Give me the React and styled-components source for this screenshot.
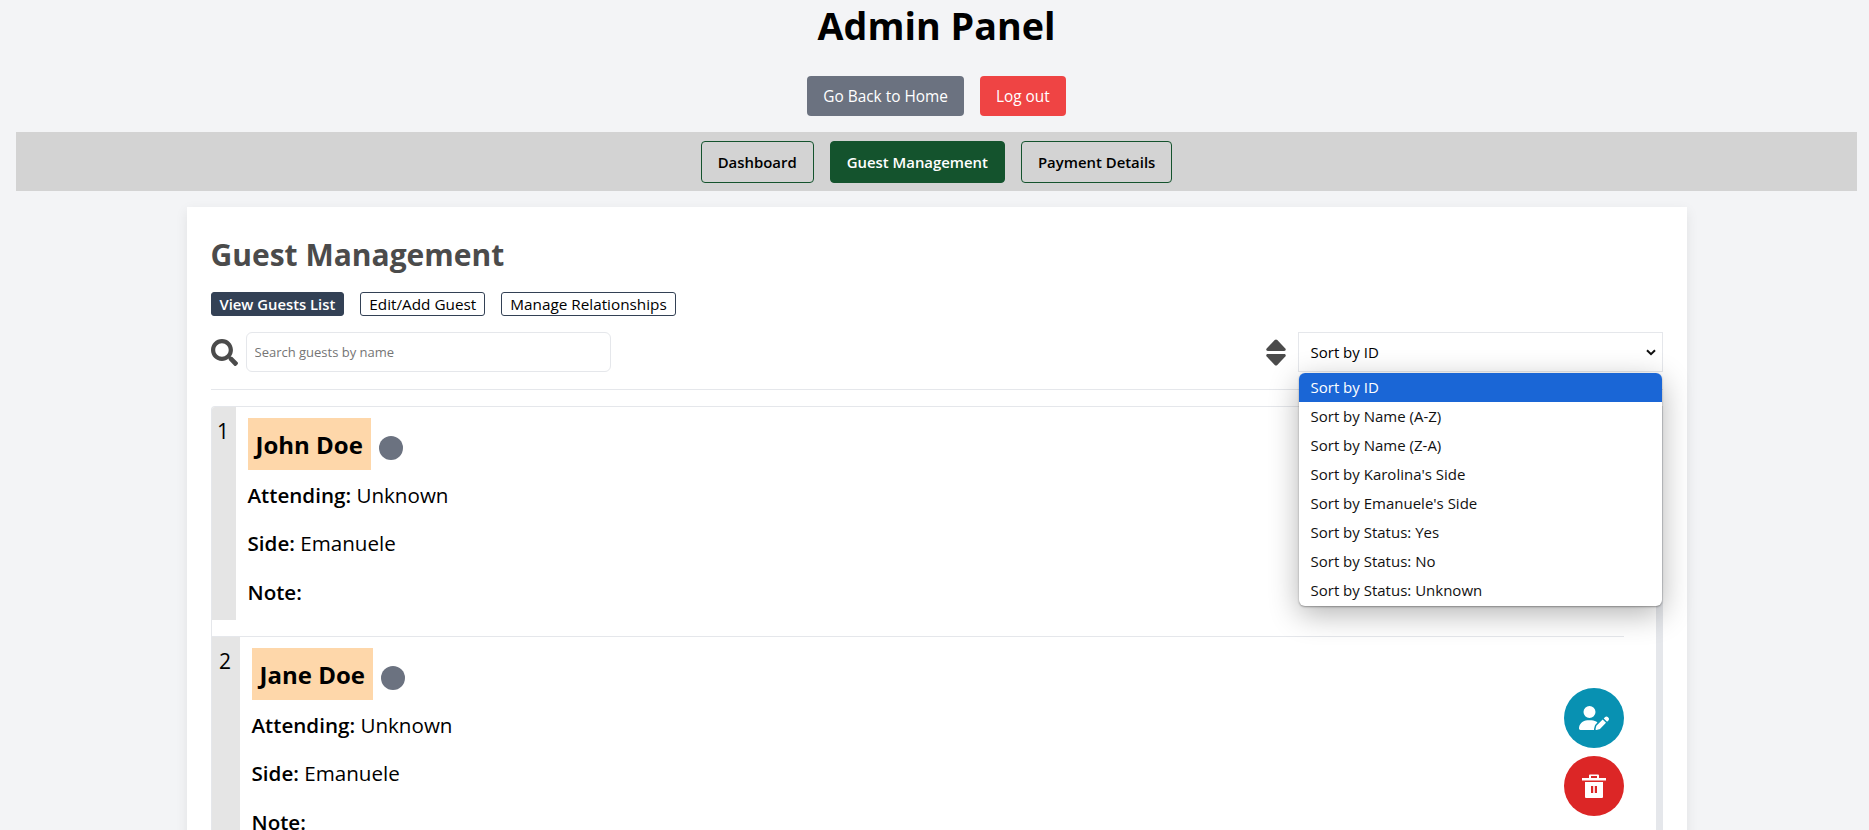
import React from "react";
import styled, { createGlobalStyle } from "styled-components";

const Global = createGlobalStyle`
  html, body { margin: 0; height: 830px; overflow: hidden; background: #f3f4f6; }
  body { font-family: "Open Sans", "Noto Sans", sans-serif; color: #000; }
  * { box-sizing: border-box; }
`;

const Page = styled.div`
  width: 1869px;
  height: 830px;
  padding: 0 12px 0 16px;
  overflow: hidden;
`;

const Title = styled.h1`
  margin: 0;
  height: 52px;
  line-height: 52px;
  text-align: center;
  font-size: 37.7px;
  font-weight: 700;
`;

const TopActions = styled.div`
  display: flex;
  justify-content: center;
  gap: 16px;
  margin-top: 24px;
`;

const TopButton = styled.button`
  height: 40px;
  padding: 0 16px;
  border: 0;
  border-radius: 4px;
  background: ${(p) => p.$bg};
  color: #fff;
  font: 400 15.4px "Open Sans", sans-serif;
`;

const NavBand = styled.nav`
  display: flex;
  justify-content: center;
  align-items: center;
  gap: 16px;
  height: 59px;
  margin-top: 16px;
  background: #d3d3d3;
`;

const NavButton = styled.button`
  height: 42px;
  padding: 0 16px;
  border: 1px solid #14532d;
  border-radius: 4px;
  background: ${(p) => (p.$active ? "#14532d" : "transparent")};
  color: ${(p) => (p.$active ? "#fff" : "#000")};
  font: 600 14.9px "Open Sans", sans-serif;
`;

const Card = styled.main`
  width: 1500px;
  height: 640px;
  margin: 16px auto 0;
  padding: 24px 24px 0;
  background: #fff;
  box-shadow: 0 4px 12px rgba(0, 0, 0, 0.08);
`;

const Heading = styled.h2`
  margin: 0;
  height: 48px;
  line-height: 48px;
  font-size: 30px;
  font-weight: 700;
  color: #4b4b4b;
`;

const SubTabs = styled.div`
  display: flex;
  gap: 16px;
  margin-top: 13px;
`;

const SubTab = styled.button`
  height: 24px;
  padding: 0 8px;
  border: 1px solid #334155;
  border-radius: 3px;
  background: ${(p) => (p.$active ? "#334155" : "#fff")};
  color: ${(p) => (p.$active ? "#fff" : "#000")};
  font: ${(p) => (p.$active ? "600 14.8px" : "500 15.3px")} "Open Sans", sans-serif;
  white-space: nowrap;
`;

const Controls = styled.div`
  display: flex;
  justify-content: space-between;
  align-items: center;
  height: 40px;
  margin-top: 16px;
`;

const SearchGroup = styled.div`
  display: flex;
  align-items: center;
  gap: 8px;
`;

const SearchInput = styled.input`
  width: 365px;
  height: 40px;
  padding: 0 8px;
  border: 1px solid #e5e7eb;
  border-radius: 6px;
  background: #fff;
  font: 400 13px "Open Sans", sans-serif;
  outline: none;
  &::placeholder { color: #757575; opacity: 1; }
`;

const SortGroup = styled.div`
  position: relative;
  display: flex;
  align-items: center;
  gap: 12px;
`;

const SortBox = styled.div`
  position: relative;
  display: flex;
  align-items: center;
  justify-content: space-between;
  width: 365px;
  height: 40px;
  padding: 0 6px 0 12px;
  border: 1px solid #e5e7eb;
  background: #fff;
  font-size: 15px;
`;

const Dropdown = styled.ul`
  position: absolute;
  top: 40px;
  right: 0;
  z-index: 5;
  width: 363px;
  height: 233px;
  margin: 0;
  padding: 0;
  list-style: none;
  overflow: hidden;
  background: #fff;
  border-radius: 6px;
  box-shadow: 0 8px 30px rgba(0, 0, 0, 0.3), 0 1px 2px rgba(0, 0, 0, 0.35);
`;

const Option = styled.li`
  height: 29px;
  line-height: 29px;
  padding-left: 12px;
  font-size: 15px;
  background: ${(p) => (p.$selected ? "#1a66d6" : "transparent")};
  color: ${(p) => (p.$selected ? "#fff" : "#111")};
`;

const Divider = styled.hr`
  height: 1px;
  margin: 17px 0 0;
  border: 0;
  background: #e5e7eb;
`;

const List = styled.div`
  height: 424px;
  margin-top: 16px;
  border-top: 1px solid #e5e7eb;
  border-right: 7px solid #e5e7eb;
  border-left: 1px solid #e5e7eb;
  border-top-left-radius: 4px;
  overflow: hidden;
`;

const GuestRow = styled.article`
  position: relative;
  display: flex;
  align-items: flex-start;
  margin-bottom: ${(p) => p.$gap}px;
`;

const IndexCell = styled.div`
  flex: 0 0 ${(p) => p.$w}px;
  height: ${(p) => p.$h}px;
  margin-left: -1px;
  padding-top: 8px;
  background: #e5e5e5;
  text-align: center;
  font-size: 21px;
  line-height: 32px;
`;

const GuestBody = styled.div`
  flex: 1;
  padding: 11px 0 0 12px;
`;

const NameRow = styled.div`
  display: flex;
  align-items: center;
  gap: 8px;
  height: 52px;
  margin-bottom: 1px;
`;

const NameTag = styled.div`
  display: flex;
  align-items: center;
  height: 52px;
  padding: 0 8px;
  background: #fed7aa;
  font-size: 24px;
  font-weight: 700;
  white-space: nowrap;
`;

const StatusDot = styled.span`
  width: 24px;
  height: 24px;
  margin-top: 8px;
  border-radius: 50%;
  background: #6b7280;
`;

const Field = styled.p`
  margin: 0;
  height: 48.4px;
  line-height: 48px;
  font-size: 20.6px;
  font-weight: 400;
  white-space: nowrap;
  & b { font-weight: 600; }
`;

const RowRule = styled.div`
  width: 1412px;
  height: 1px;
  background: #e5e7eb;
`;

const RowActions = styled.div`
  position: absolute;
  top: 51px;
  right: 32px;
  display: flex;
  flex-direction: column;
  gap: 8px;
`;

const Round = styled.button`
  display: flex;
  align-items: center;
  justify-content: center;
  width: 60px;
  height: 60px;
  padding: 0;
  border: 0;
  border-radius: 50%;
  background: ${(p) => p.$bg};
`;

const SearchIcon = () => (
  <svg width="27" height="27" viewBox="0 0 512 512" fill="#4b4b4b">
    <path d="M505 442.700L405.300 343c-4.500-4.500-10.600-7-17-7H372c27.600-35.300 44-79.700 44-128C416 93.100 322.900 0 208 0S0 93.100 0 208s93.100 208 208 208c48.300 0 92.700-16.400 128-44v16.300c0 6.400 2.500 12.500 7 17l99.700 99.700c9.400 9.400 24.600 9.400 33.900 0l28.300-28.300c9.400-9.400 9.400-24.600.1-34zM208 336c-70.700 0-128-57.200-128-128 0-70.700 57.200-128 128-128 70.700 0 128 57.200 128 128 0 70.700-57.200 128-128 128z" />
  </svg>
);

const SortIcon = () => (
  <svg width="20" height="27" viewBox="0 0 20 27" fill="#4b4b4b">
    <path d="M8.700 1a2 2 0 0 1 2.600 0l8 8.500c1 1.100.3 2.500-1.100 2.500H1.800C.4 12-.3 10.600.7 9.500z" />
    <path d="M8.700 26a2 2 0 0 0 2.600 0l8-8.500c1-1.100.3-2.500-1.100-2.500H1.800C.4 15-.3 16.400.7 17.500z" />
  </svg>
);

const Chevron = () => (
  <svg width="10" height="7" viewBox="0 0 10 7" fill="none" stroke="#111" strokeWidth="2">
    <path d="M1 1.200l4 4 4-4" />
  </svg>
);

const UserEdit = () => (
  <svg width="30" height="24" viewBox="0 0 640 512" fill="#fff">
    <path d="M224 256A128 128 0 1 0 224 0a128 128 0 1 0 0 256zm-45.700 48C79.800 304 0 383.800 0 482.300C0 498.700 13.300 512 29.700 512H322.800c-3.100-8.800-3.700-18.400-1.400-27.800l15-60.100c2.800-11.300 8.600-21.500 16.800-29.700l40.300-40.300c-32.100-31-75.700-50.100-123.900-50.100H178.300zm435.500-68.300c-15.600-15.600-40.900-15.600-56.600 0l-29.400 29.400 71 71 29.400-29.400c15.600-15.600 15.600-40.900 0-56.600l-14.400-14.400zM375.900 417c-4.100 4.100-7 9.200-8.400 14.900l-15 60.100c-1.400 5.500 .2 11.200 4.200 15.200s9.700 5.600 15.200 4.200l60.100-15c5.600-1.400 10.800-4.300 14.900-8.400L576.100 358.700l-71-71L375.900 417z" />
  </svg>
);

const Trash = () => (
  <svg width="26" height="26" viewBox="0 0 26 26" fill="#fff">
    <path d="M9 1.500h8a1 1 0 0 1 1 1V5h7v2.500H1V5h7V2.500a1 1 0 0 1 1-1zM10 3v2h6V3z" />
    <path fillRule="evenodd" d="M4 9h18v15a1 1 0 0 1-1 1H5a1 1 0 0 1-1-1zm6 4v7h2.200v-7zm3.800 0v7H16v-7z" />
  </svg>
);

const sortOptions = [
  "Sort by ID",
  "Sort by Name (A-Z)",
  "Sort by Name (Z-A)",
  "Sort by Karolina's Side",
  "Sort by Emanuele's Side",
  "Sort by Status: Yes",
  "Sort by Status: No",
  "Sort by Status: Unknown",
];

const guests = [
  { id: 1, name: "John Doe", w: 25, h: 213, gap: 16 },
  { id: 2, name: "Jane Doe", w: 29, h: 230, gap: 0 },
];

const Guest = ({ guest }) => (
  <GuestRow $gap={guest.gap}>
    <IndexCell $w={guest.w} $h={guest.h}>{guest.id}</IndexCell>
    <GuestBody>
      <NameRow>
        <NameTag>{guest.name}</NameTag>
        <StatusDot />
      </NameRow>
      <Field><b>Attending:</b> Unknown</Field>
      <Field><b>Side:</b> Emanuele</Field>
      <Field><b>Note:</b></Field>
    </GuestBody>
    <RowActions>
      <Round $bg="#0891b2" aria-label="Edit guest"><UserEdit /></Round>
      <Round $bg="#dc2626" aria-label="Delete guest"><Trash /></Round>
    </RowActions>
  </GuestRow>
);

export default function App() {
  return (
    <Page>
      <Global />
      <Title>Admin Panel</Title>
      <TopActions>
        <TopButton $bg="#6b7280">Go Back to Home</TopButton>
        <TopButton $bg="#ef4444">Log out</TopButton>
      </TopActions>
      <NavBand>
        <NavButton>Dashboard</NavButton>
        <NavButton $active>Guest Management</NavButton>
        <NavButton>Payment Details</NavButton>
      </NavBand>
      <Card>
        <Heading>Guest Management</Heading>
        <SubTabs>
          <SubTab $active>View Guests List</SubTab>
          <SubTab>Edit/Add Guest</SubTab>
          <SubTab>Manage Relationships</SubTab>
        </SubTabs>
        <Controls>
          <SearchGroup>
            <SearchIcon />
            <SearchInput placeholder="Search guests by name" readOnly />
          </SearchGroup>
          <SortGroup>
            <SortIcon />
            <SortBox>
              <span>Sort by ID</span>
              <Chevron />
              <Dropdown>
                {sortOptions.map((o, i) => (
                  <Option key={o} $selected={i === 0}>{o}</Option>
                ))}
              </Dropdown>
            </SortBox>
          </SortGroup>
        </Controls>
        <Divider />
        <List>
          {guests.map((g) => (
            <React.Fragment key={g.id}>
              <Guest guest={g} />
              {g.gap > 0 && <RowRule />}
            </React.Fragment>
          ))}
        </List>
      </Card>
    </Page>
  );
}
